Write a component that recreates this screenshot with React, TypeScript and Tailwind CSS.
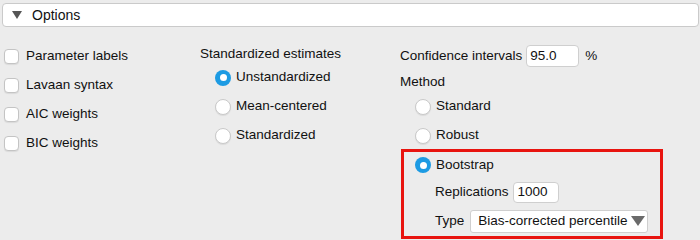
const font = { fontFamily: '"Liberation Sans", Arial, sans-serif' };

function Checkbox({ label }: { label: string }) {
  return (
    <div className="flex h-[29px] items-center">
      <span className="h-[15px] w-[15px] rounded-[4px] border border-[#c4c4c4] bg-white shadow-[0_1px_1px_rgba(0,0,0,0.08)]" />
      <span className="ml-[7px]">{label}</span>
    </div>
  );
}

function Radio({ label, checked = false, h = "h-[29px]" }: { label: string; checked?: boolean; h?: string }) {
  return (
    <div className={`flex items-center ${h}`}>
      {checked ? (
        <span className="flex h-[16px] w-[16px] items-center justify-center rounded-full bg-[#1d9be3]">
          <span className="h-[7px] w-[7px] rounded-full bg-white" />
        </span>
      ) : (
        <span className="h-[16px] w-[16px] rounded-full border border-[#c9c9c9] bg-white shadow-[0_1px_1px_rgba(0,0,0,0.08)]" />
      )}
      <span className="ml-[5px]">{label}</span>
    </div>
  );
}

export default function App() {
  return (
    <div
      className="h-[240px] w-[700px] overflow-hidden bg-[#ececec] px-[2px] pt-[3px] text-[13.5px] text-[#111]"
      style={font}
    >
      <div className="flex h-[24px] w-[697px] items-center rounded-[4px] border border-[#cacaca] bg-white pl-[9px]">
        <svg width="10" height="8" viewBox="0 0 10 8">
          <path d="M0 0 H10 L5 8 Z" fill="#555" />
        </svg>
        <span className="ml-[10px] text-[14px]">Options</span>
      </div>

      <div className="mt-[15px] flex">
        <div className="w-[198px] pl-[2px]">
          <Checkbox label="Parameter labels" />
          <Checkbox label="Lavaan syntax" />
          <Checkbox label="AIC weights" />
          <Checkbox label="BIC weights" />
        </div>

        <div className="w-[200px]">
          <div className="flex h-[21px] items-center pt-[3px]">Standardized estimates</div>
          <div className="pl-[15px]">
            <Radio label="Unstandardized" checked />
            <Radio label="Mean-centered" />
            <Radio label="Standardized" />
          </div>
        </div>

        <div className="flex-1">
          <div className="flex h-[28px] items-center">
            <span>Confidence intervals</span>
            <span className="ml-[4px] flex h-[22px] w-[53px] items-center rounded-[4px] border border-[#cfcfcf] bg-white pl-[3px]">
              95.0
            </span>
            <span className="ml-[6px]">%</span>
          </div>
          <div className="flex h-[22px] items-center pt-[2px]">Method</div>
          <div className="pl-[15px]">
            <Radio label="Standard" />
            <Radio label="Robust" />
          </div>
          <div className="-mt-[1px] ml-[1px] h-[90px] w-[262px] border-[3px] border-[#e8140f] pl-[11px]">
            <Radio label="Bootstrap" checked h="h-[26px]" />
            <div className="flex h-[28px] items-center pl-[20px]">
              <span>Replications</span>
              <span className="ml-[4px] flex h-[21px] w-[46px] items-center rounded-[4px] border border-[#cfcfcf] bg-white pl-[4px]">
                1000
              </span>
            </div>
            <div className="flex h-[30px] items-center pl-[20px]">
              <span>Type</span>
              <span className="ml-[6px] flex h-[23px] w-[178px] items-center justify-between rounded-[3px] border border-[#cfcfcf] bg-white pl-[7px] pr-[2px]">
                <span>Bias-corrected percentile</span>
                <svg width="14" height="10" viewBox="0 0 14 10">
                  <path d="M0 0 H14 L7 10 Z" fill="#6a6a6a" />
                </svg>
              </span>
            </div>
          </div>
        </div>
      </div>
    </div>
  );
}
